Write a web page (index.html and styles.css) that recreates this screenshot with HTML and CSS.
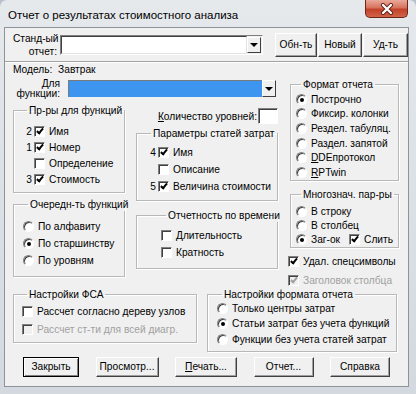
FILE: index.html
```html
<!DOCTYPE html>
<html lang="ru">
  <head>
    <meta charset="UTF-8" />
    <title>Отчет о результатах стоимостного анализа</title>
    <link rel="stylesheet" href="styles.css">
  </head>
  <body>
    <div class="window">
      <div class="titlebar">
        <span class="title">Отчет о результатах стоимостного анализа</span>
        <span class="close">
          <svg width="14" height="12" viewBox="0 0 14 12">
            <path d="M3 2 L11 10 M11 2 L3 10" stroke="#5a1a10" stroke-width="4" stroke-linecap="round" />
            <path d="M3 2 L11 10 M11 2 L3 10" stroke="#fff" stroke-width="2.4" stroke-linecap="round" />
          </svg>
        </span>
      </div>

      <div class="client">
        <div class="toolbar">
          <div class="tb-label">Станд-ый<br>отчет:</div>
          <div class="combo std">
            <span class="combo-field"></span>
            <span class="drop"><i class="arrow"></i></span>
          </div>
          <button class="btn tb-btn">Обн-ть</button>
          <button class="btn tb-btn">Новый</button>
          <button class="btn tb-btn">Уд-ть</button>
        </div>

        <div class="model">Модель:&nbsp; Завтрак</div>

        <div class="main">
          <div class="left">
            <div class="func-row">
              <div class="func-label">Для<br>функции:</div>
              <div class="combo blue">
                <span class="combo-field"></span>
                <span class="drop"><i class="arrow"></i></span>
              </div>
            </div>

            <div class="cols">
              <div class="col col-1">
                <fieldset class="group g-func">
                  <legend>Пр-ры для функций</legend>
                  <div class="item"><span class="num">2</span><span class="box on"></span>Имя</div>
                  <div class="item"><span class="num">1</span><span class="box on"></span>Номер</div>
                  <div class="item"><span class="num"></span><span class="box"></span>Определение</div>
                  <div class="item"><span class="num">3</span><span class="box on"></span>Стоимость</div>
                </fieldset>

                <fieldset class="group g-order">
                  <legend>Очередн-ть функций</legend>
                  <div class="item"><span class="radio"></span>По алфавиту</div>
                  <div class="item"><span class="radio on"></span>По старшинству</div>
                  <div class="item"><span class="radio"></span>По уровням</div>
                </fieldset>
              </div>

              <div class="col col-2">
                <div class="levels">
                  <span><u>К</u>оличество уровней:</span>
                  <span class="edit"></span>
                </div>

                <fieldset class="group g-cost">
                  <legend>Параметры статей затрат</legend>
                  <div class="item"><span class="num">4</span><span class="box on"></span>Имя</div>
                  <div class="item"><span class="num"></span><span class="box"></span>Описание</div>
                  <div class="item"><span class="num">5</span><span class="box on"></span>Величина стоимости</div>
                </fieldset>

                <fieldset class="group g-time">
                  <legend>Отчетность по времени</legend>
                  <div class="item"><span class="box"></span>Длительность</div>
                  <div class="item"><span class="box"></span>Кратность</div>
                </fieldset>
              </div>
            </div>
          </div>

          <div class="right">
            <fieldset class="group g-format">
              <legend>Формат отчета</legend>
              <div class="item"><span class="radio on"></span>Построчно</div>
              <div class="item"><span class="radio"></span>Фиксир. колонки</div>
              <div class="item"><span class="radio"></span>Рездел. табуляц.</div>
              <div class="item"><span class="radio"></span>Раздел. запятой</div>
              <div class="item"><span class="radio"></span><u>D</u>DEпротокол</div>
              <div class="item"><span class="radio"></span><u>R</u>PTwin</div>
            </fieldset>

            <fieldset class="group g-multi">
              <legend>Многознач. пар-ры</legend>
              <div class="item"><span class="radio"></span>В строку</div>
              <div class="item"><span class="radio"></span>В столбец</div>
              <div class="item">
                <span class="radio on"></span>Заг-ок
                <span class="box on merge"></span>Слить
              </div>
            </fieldset>

            <div class="item solo"><span class="box on"></span>Удал. спецсимволы</div>
            <div class="item solo disabled"><span class="box on"></span>Заголовок столбца</div>
          </div>
        </div>

        <div class="bottom">
          <fieldset class="group g-fsa">
            <legend>Настройки ФСА</legend>
            <div class="item"><span class="box"></span>Рассчет согласно дереву узлов</div>
            <div class="item disabled"><span class="box"></span>Рассчет ст-ти для всей диагр.</div>
          </fieldset>

          <fieldset class="group g-settings">
            <legend>Настройки формата отчета</legend>
            <div class="item"><span class="radio"></span>Только центры затрат</div>
            <div class="item"><span class="radio on"></span>Статьи затрат без учета функций</div>
            <div class="item"><span class="radio"></span>Функции без учета статей затрат</div>
          </fieldset>
        </div>

        <div class="actions">
          <button class="btn default w-close">Закрыть</button>
          <button class="btn w-view">Просмотр...</button>
          <button class="btn w-print"><u>П</u>ечать...</button>
          <button class="btn w-report">Отчет...</button>
          <button class="btn w-help">Справка</button>
        </div>
      </div>
    </div>
  </body>
</html>
```

FILE: styles.css
```css
body {
  margin: 0;
  width: 416px;
  height: 394px;
  overflow: hidden;
  font-family: "Liberation Sans", Arial, sans-serif;
  font-size: 10.2px;
  color: #000;
  background: #b9c2cc;
}

.window {
  box-sizing: border-box;
  height: 394px;
  padding: 0 7px 7px 4px;
  border-radius: 7px 7px 0 0;
  background: linear-gradient(180deg, #e6e9ec 0%, #dde2e7 40%, #d3d9df 100%);
}

.titlebar {
  display: flex;
  justify-content: space-between;
  align-items: flex-start;
  height: 27px;
}

.title {
  margin: 8px 0 0 4px;
  font-size: 11.5px;
  line-height: 15px;
}

.close {
  display: flex;
  align-items: center;
  justify-content: center;
  width: 43px;
  height: 18px;
  margin-right: 1px;
  border: 1px solid #6e2418;
  border-top: 0;
  border-radius: 0 0 5px 5px;
  box-sizing: border-box;
  background: linear-gradient(180deg, #e9a99a 0%, #d7735c 45%, #c2412a 55%, #d0654a 100%);
}

.client {
  box-sizing: border-box;
  height: 360px;
  border: 1px solid #8d939a;
  background: #f0f0f0;
}

/* top toolbar */

.toolbar {
  display: flex;
  align-items: center;
  height: 33px;
  padding-left: 8px;
  border-bottom: 1px solid #a0a0a0;
  box-shadow: 0 1px 0 #fff;
}

.tb-label {
  width: 44px;
  text-align: right;
  line-height: 13px;
  white-space: nowrap;
}

.combo {
  display: flex;
  box-sizing: border-box;
  border: 1px solid;
  border-color: #808080 #fff #fff #808080;
}

.combo-field {
  flex: 1;
  background: #fff;
  border: 1px solid;
  border-color: #404040 #e3e3e3 #e3e3e3 #404040;
}

.combo.std {
  width: 203px;
  height: 20px;
  margin-left: 3px;
}

.drop {
  display: flex;
  align-items: center;
  justify-content: center;
  width: 14px;
  background: #f0f0f0;
  border: 1px solid;
  border-color: #fff #404040 #404040 #fff;
  box-sizing: border-box;
}

.combo.std .drop {
  margin: 1px 1px 1px 0;
}

.arrow {
  width: 0;
  height: 0;
  border-left: 4px solid transparent;
  border-right: 4px solid transparent;
  border-top: 4px solid #000;
}

.btn {
  box-sizing: border-box;
  height: 20px;
  padding: 0;
  font-family: inherit;
  font-size: 10.2px;
  color: #000;
  white-space: nowrap;
  background: #f0f0f0;
  border: 1px solid;
  border-color: #fff #404040 #404040 #fff;
  box-shadow: inset -1px -1px 0 #a0a0a0;
}

.tb-btn {
  height: 24px;
}

.tb-btn:nth-of-type(1) {
  width: 42px;
  margin-left: 12px;
}

.tb-btn:nth-of-type(2) {
  width: 44px;
  margin-left: 1px;
}

.tb-btn:nth-of-type(3) {
  width: 45px;
  margin-left: 1px;
}

.model {
  padding-left: 8px;
  line-height: 13px;
  margin-top: 1px;
}

/* main area */

.main {
  display: flex;
  padding-left: 8px;
}

.left {
  width: 267px;
}

.func-row {
  display: flex;
  align-items: center;
  height: 21px;
  margin-top: 2px;
}

.func-label {
  width: 47px;
  text-align: right;
  line-height: 10px;
  white-space: nowrap;
}

.combo.blue {
  width: 208px;
  height: 17px;
  margin-left: 8px;
  border: 0;
}

.combo.blue .combo-field {
  background: #3d95ef;
  border-color: #7a7a7a #3d95ef #3d95ef #7a7a7a;
}

.cols {
  display: flex;
  gap: 11px;
}

.col-1 {
  width: 112px;
}

.col-2 {
  width: 142px;
}

.group {
  margin: 0;
  padding: 0;
  border: 1px solid #b8b8b8;
  box-shadow: 1px 1px 0 #fff, inset 1px 1px 0 #fff;
  min-width: 0;
}

.group legend {
  margin-left: 5px;
  padding: 0 2px;
  line-height: 13px;
  white-space: nowrap;
}

.item {
  display: flex;
  align-items: center;
  white-space: nowrap;
}

.num {
  width: 10px;
  margin-right: 2px;
  text-align: right;
}

.box {
  position: relative;
  flex: none;
  box-sizing: border-box;
  width: 11px;
  height: 11px;
  margin-right: 4px;
  background: #fff;
  border: 1px solid;
  border-color: #808080 #fff #fff #808080;
  box-shadow: inset 1px 1px 0 #404040;
}

.box.on::after {
  content: "";
  position: absolute;
  left: 3px;
  top: 0;
  width: 2px;
  height: 5px;
  border: solid #000;
  border-width: 0 2px 2px 0;
  transform: rotate(40deg);
}

.radio {
  position: relative;
  flex: none;
  box-sizing: border-box;
  width: 11px;
  height: 11px;
  margin-right: 4px;
  border-radius: 50%;
  background: #fff;
  border: 1px solid;
  border-color: #808080 #fff #fff #808080;
  box-shadow: inset 1px 1px 0 #404040;
}

.radio.on::after {
  content: "";
  position: absolute;
  left: 3px;
  top: 3px;
  width: 4px;
  height: 4px;
  border-radius: 50%;
  background: #000;
}

.disabled {
  color: #a0a0a0;
}

.disabled .box {
  background: #f0f0f0;
}

.disabled .box.on::after {
  border-color: #a0a0a0;
}

/* left column groups */

.g-func {
  margin-top: 5px;
  padding: 6px 0 5px 8px;
}

.g-func .item {
  height: 16px;
}

.g-order {
  margin-top: 5px;
  padding: 7px 0 7px 9px;
}

.g-order .item {
  height: 17px;
}

/* middle column */

.levels {
  display: flex;
  align-items: center;
  justify-content: flex-end;
  height: 18px;
  margin-top: 8px;
}

.edit {
  width: 20px;
  height: 16px;
  margin-left: 1px;
  box-sizing: border-box;
  background: #fff;
  border: 1px solid;
  border-color: #808080 #fff #fff #808080;
  box-shadow: inset 1px 1px 0 #404040;
}

.g-cost {
  margin-top: 2px;
  padding: 4px 0 5px 9px;
}

.g-cost .item,
.g-time .item {
  height: 17px;
}

.g-time {
  margin-top: 8px;
  padding: 5px 0 7px 24px;
}

/* right column */

.right {
  width: 111px;
  margin-left: 8px;
  margin-top: 2px;
}

.right .group {
  margin-left: 2px;
}

.g-format {
  padding: 1px 0 0 5px;
}

.g-format .item {
  height: 14.6px;
}

.g-multi {
  margin-top: 7px;
  padding: 4px 0 0 5px;
}

.g-multi .item {
  height: 14px;
}

.merge {
  margin-left: 9px;
}

.solo {
  height: 14px;
  margin-top: 7px;
}

.solo.disabled {
  margin-top: 5px;
}

/* bottom groups */

.bottom {
  display: flex;
  gap: 10px;
  padding-left: 8px;
}

.g-fsa,
.g-settings {
  align-self: flex-start;
  box-sizing: border-box;
}

.g-fsa {
  width: 184px;
  height: 55px;
  padding: 2px 0 3px 8px;
}

.g-fsa .item {
  height: 18px;
}

.g-settings {
  width: 190px;
  height: 64px;
  padding: 0 0 4px 9px;
}

.g-settings .item {
  height: 15.5px;
}

/* dialog buttons */

.actions {
  display: flex;
  justify-content: space-between;
  padding: 0 18px;
  margin-top: 5px;
}

.btn.default {
  border: 1px solid #000;
  box-shadow: inset 1px 1px 0 #fff, inset -1px -1px 0 #808080;
}

.w-close { width: 56px; }
.w-view { width: 63px; }
.w-print { width: 62px; }
.w-report { width: 60px; }
.w-help { width: 60px; }
```
